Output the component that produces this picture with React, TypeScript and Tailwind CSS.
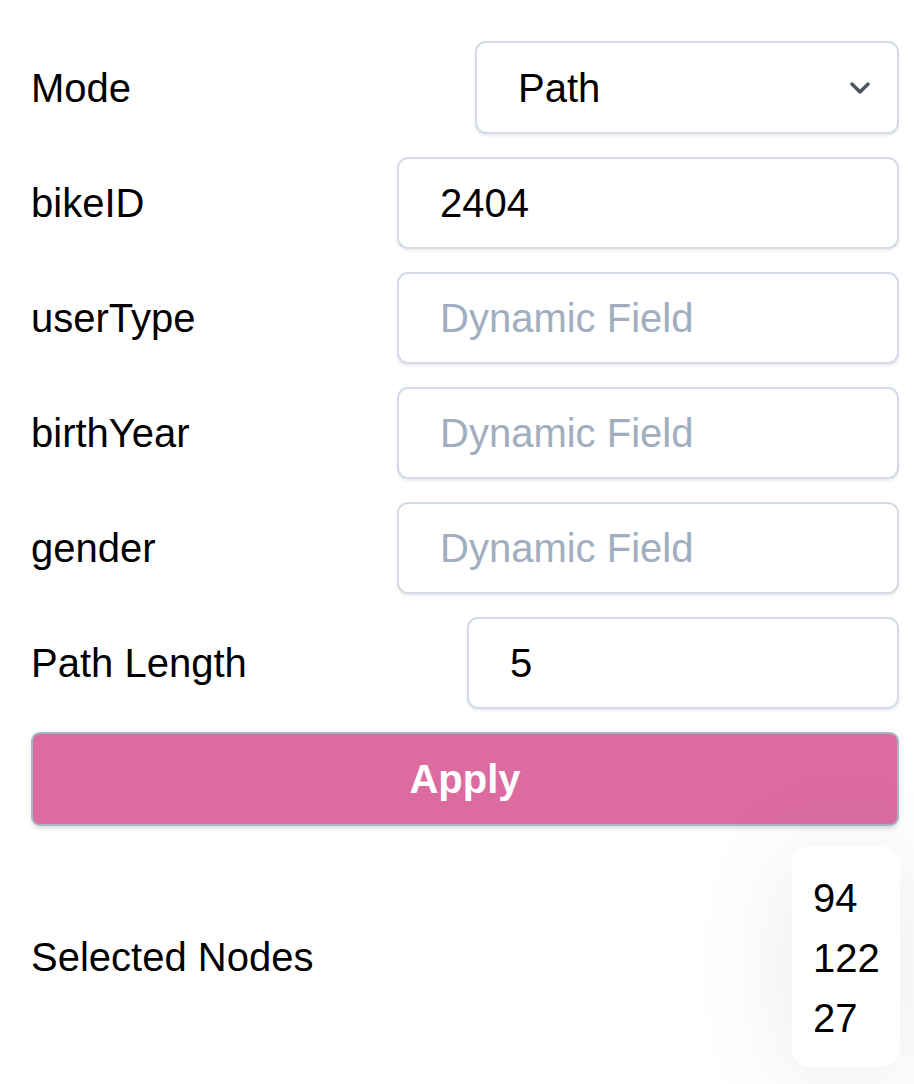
import { useState } from 'react';

const fields = [
  { label: 'bikeID', value: '2404' },
  { label: 'userType', value: '' },
  { label: 'birthYear', value: '' },
  { label: 'gender', value: '' },
];

const inputClass =
  'h-[92px] rounded-[11px] border-2 border-[#d3dbe6] bg-white px-[41px] text-[40px] text-black shadow-[0_2px_3px_rgba(0,0,0,0.08)] outline-none placeholder:text-[#a0aec0]';

export default function App() {
  const [mode, setMode] = useState('Path');
  const [values, setValues] = useState<Record<string, string>>(
    Object.fromEntries(fields.map(f => [f.label, f.value]))
  );
  const [pathLength, setPathLength] = useState('5');
  const selectedNodes = [94, 122, 27];

  return (
    <div
      className="min-h-screen bg-white pl-[31px] pr-[15px] pt-[41px] text-black"
      style={{ fontFamily: '"Liberation Sans", Arial, sans-serif' }}
    >
      <div className="flex flex-col gap-[23px]">
        {/* Mode */}
        <div className="flex items-center justify-between">
          <span className="text-[40px]">Mode</span>
          <div className="relative w-[424px]">
            <select
              value={mode}
              onChange={e => setMode(e.target.value)}
              className={`${inputClass} block h-[93px] w-full appearance-none pl-[41px]`}
            >
              <option>Path</option>
              <option>Node</option>
            </select>
            <svg
              className="pointer-events-none absolute right-[27px] top-1/2 -translate-y-1/2"
              width="24"
              height="16"
              viewBox="0 0 24 16"
              fill="none"
            >
              <path d="M4 4l8 8 8-8" stroke="#4a5568" strokeWidth="3.5" strokeLinecap="round" strokeLinejoin="round" />
            </svg>
          </div>
        </div>

        {/* Dynamic fields */}
        {fields.map(f => (
          <div key={f.label} className="flex items-center justify-between">
            <span className="text-[40px]">{f.label}</span>
            <input
              value={values[f.label]}
              placeholder="Dynamic Field"
              onChange={e => setValues({ ...values, [f.label]: e.target.value })}
              className={`${inputClass} w-[502px]`}
            />
          </div>
        ))}

        {/* Path Length */}
        <div className="flex items-center justify-between">
          <span className="text-[40px]">Path Length</span>
          <input
            value={pathLength}
            onChange={e => setPathLength(e.target.value)}
            className={`${inputClass} w-[432px]`}
          />
        </div>

        <button className="h-[94px] w-full rounded-[9px] border-2 border-[#a9b5c4] bg-[#dc6ca0] text-[40px] font-bold text-white shadow-[0_3px_4px_rgba(0,0,0,0.12)]">
          Apply
        </button>
      </div>

      {/* Selected Nodes */}
      <div className="mt-[20px] flex items-center justify-between">
        <span className="text-[40px]">Selected Nodes</span>
        <div className="mr-[-1px] w-[108px] rounded-[18px] bg-white pb-[19px] pl-[21px] pt-[22px] text-[40px] leading-[60px] shadow-[0_10px_110px_rgba(0,0,0,0.09)]">
          {selectedNodes.map(n => (
            <div key={n}>{n}</div>
          ))}
        </div>
      </div>
    </div>
  );
}
